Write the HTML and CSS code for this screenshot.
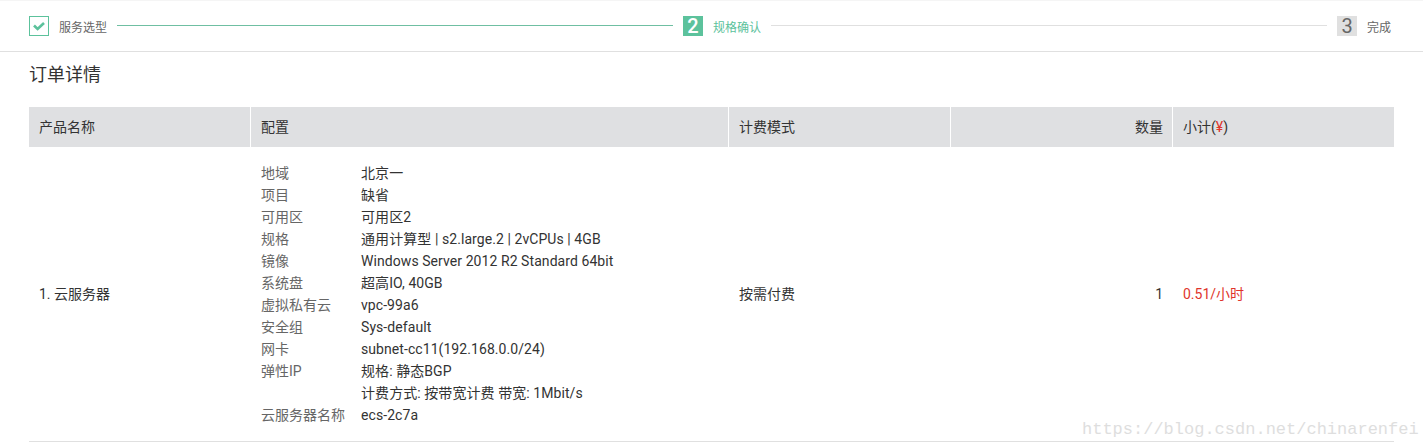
FILE: index.html
```html
<!DOCTYPE html>
<html lang="zh">
<head>
    <meta charset="UTF-8">
    <title>订单详情</title>
    <link rel="stylesheet" href="styles.css">
</head>
<body>
    <div class="steps">
        <div class="step step-done">
            <span class="step-icon">
                <svg width="12" height="9" viewBox="0 0 12 9"><path d="M1 3.5 L4.6 7 L11 1" fill="none" stroke="#5cc29c" stroke-width="2.6"/></svg>
            </span>
            <span class="step-label">服务选型</span>
        </div>
        <div class="step-line line-done"></div>
        <div class="step step-active">
            <span class="step-icon">2</span>
            <span class="step-label">规格确认</span>
        </div>
        <div class="step-line"></div>
        <div class="step step-todo">
            <span class="step-icon">3</span>
            <span class="step-label">完成</span>
        </div>
    </div>

    <div class="content">
        <h2 class="title">订单详情</h2>
        <table class="order-table">
            <thead>
                <tr>
                    <th>产品名称</th>
                    <th>配置</th>
                    <th>计费模式</th>
                    <th class="num">数量</th>
                    <th>小计(<span class="red">¥</span>)</th>
                </tr>
            </thead>
            <tbody>
                <tr>
                    <td>1. 云服务器</td>
                    <td>
                        <dl class="spec">
                            <dt>地域</dt><dd>北京一</dd>
                            <dt>项目</dt><dd>缺省</dd>
                            <dt>可用区</dt><dd>可用区2</dd>
                            <dt>规格</dt><dd>通用计算型 | s2.large.2 | 2vCPUs | 4GB</dd>
                            <dt>镜像</dt><dd>Windows Server 2012 R2 Standard 64bit</dd>
                            <dt>系统盘</dt><dd>超高IO, 40GB</dd>
                            <dt>虚拟私有云</dt><dd>vpc-99a6</dd>
                            <dt>安全组</dt><dd>Sys-default</dd>
                            <dt>网卡</dt><dd>subnet-cc11(192.168.0.0/24)</dd>
                            <dt>弹性IP</dt><dd>规格: 静态BGP<br>计费方式: 按带宽计费 带宽: 1Mbit/s</dd>
                            <dt>云服务器名称</dt><dd>ecs-2c7a</dd>
                        </dl>
                    </td>
                    <td>按需付费</td>
                    <td class="num">1</td>
                    <td class="red">0.51/小时</td>
                </tr>
            </tbody>
        </table>
    </div>

    <div class="watermark">https://blog.csdn.net/chinarenfei</div>
</body>
</html>
```

FILE: styles.css
```css
body {
    margin: 0;
    height: 445px;
    overflow: hidden;
    position: relative;
    background-color: #fff;
    color: #333;
    font-family: Roboto, "Noto Sans CJK SC", sans-serif;
    font-size: 14px;
}
.steps {
    display: flex;
    align-items: center;
    gap: 10px;
    height: 50px;
    padding: 0 32px 0 29px;
    border-top: 1px solid #f5f5f5;
    border-bottom: 1px solid #e0e0e0;
}
.step {
    display: flex;
    align-items: center;
    gap: 10px;
    font-size: 12px;
    color: #666;
}
.step-icon {
    display: flex;
    align-items: center;
    justify-content: center;
    width: 20px;
    height: 20px;
    box-sizing: border-box;
    font-size: 20px;
}
.step-done .step-icon {
    border: 1px solid #5cc29c;
}
.step-active .step-icon {
    background-color: #5cc29c;
    color: #fff;
    font-weight: 500;
}
.step-active .step-label {
    color: #5cc29c;
}
.step-todo .step-icon {
    background-color: #e0e0e0;
    color: #666;
}
.step-line {
    flex: 1;
    height: 1px;
    margin-bottom: 1px;
    background-color: #e0e0e0;
}
.line-done {
    background-color: #6fbfa2;
}
.content {
    padding: 0 29px;
}
.title {
    margin: 0;
    height: 55px;
    line-height: 45px;
    font-size: 18px;
    font-weight: 400;
    color: #333;
}
.order-table {
    width: 1365px;
    table-layout: fixed;
    border-collapse: separate;
    border-spacing: 0;
}
.order-table th {
    box-sizing: border-box;
    height: 40px;
    padding: 0 10px 2px;
    background-color: #dfe0e2;
    border-left: 1px solid #fff;
    font-weight: 400;
    text-align: left;
}
.order-table th:first-child {
    border-left: 0;
}
.order-table th:nth-child(1) { width: 221px; }
.order-table th:nth-child(2) { width: 478px; }
.order-table th:nth-child(3),
.order-table th:nth-child(4),
.order-table th:nth-child(5) { width: 222px; }
.order-table td {
    padding: 15px 10px 16px 11px;
    line-height: 22px;
    border-bottom: 1px solid #e0e0e0;
}
.order-table td:first-child {
    padding-left: 10px;
}
.order-table th.num,
.order-table td.num {
    padding-right: 9px;
    text-align: right;
}
.red {
    color: #e0342b;
}
.spec {
    display: grid;
    grid-template-columns: 100px 1fr;
    margin: 0 0 -1px;
    line-height: 22px;
}
.spec dt {
    color: #666;
}
.spec dd {
    margin: 0;
    letter-spacing: 0.07px;
}
.watermark {
    position: absolute;
    left: 1082px;
    top: 420px;
    font-family: "Liberation Mono", monospace;
    font-size: 17px;
    color: #dedede;
}
```
